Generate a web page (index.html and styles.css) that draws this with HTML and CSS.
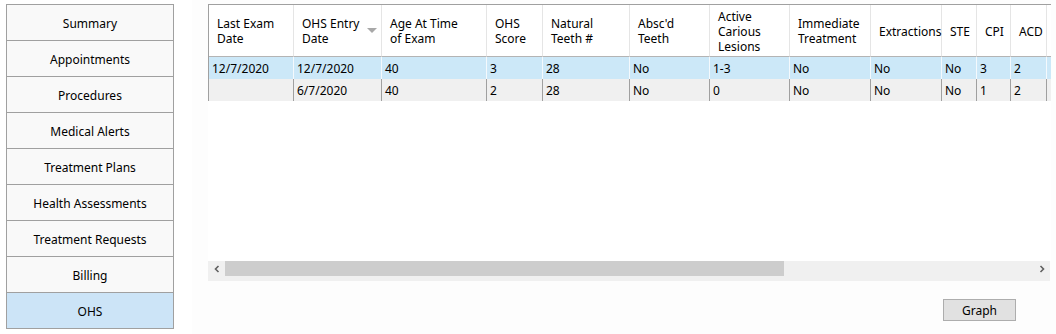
FILE: index.html
```html
<!DOCTYPE html>
<html lang="en">
<head>
    <meta charset="UTF-8">
    <title>OHS</title>
    <link rel="stylesheet" href="styles.css">
</head>
<body>
    <div class="window">
        <nav class="tabs">
            <div class="tab">Summary</div>
            <div class="tab">Appointments</div>
            <div class="tab">Procedures</div>
            <div class="tab">Medical Alerts</div>
            <div class="tab">Treatment Plans</div>
            <div class="tab">Health Assessments</div>
            <div class="tab">Treatment Requests</div>
            <div class="tab">Billing</div>
            <div class="tab active">OHS</div>
        </nav>

        <main class="panel">
            <div class="grid-area">
                <div class="grid">
                    <div class="row head">
                        <div class="cell">Last Exam<br>Date</div>
                        <div class="cell">OHS Entry<br>Date<span class="sort"></span></div>
                        <div class="cell">Age At Time<br>of Exam</div>
                        <div class="cell">OHS<br>Score</div>
                        <div class="cell">Natural<br>Teeth #</div>
                        <div class="cell">Absc'd<br>Teeth</div>
                        <div class="cell">Active<br>Carious<br>Lesions</div>
                        <div class="cell">Immediate<br>Treatment</div>
                        <div class="cell">Extractions</div>
                        <div class="cell">STE</div>
                        <div class="cell">CPI</div>
                        <div class="cell">ACD</div>
                        <div class="cell"></div>
                    </div>
                    <div class="row selected">
                        <div class="cell">12/7/2020</div>
                        <div class="cell">12/7/2020</div>
                        <div class="cell">40</div>
                        <div class="cell">3</div>
                        <div class="cell">28</div>
                        <div class="cell">No</div>
                        <div class="cell">1-3</div>
                        <div class="cell">No</div>
                        <div class="cell">No</div>
                        <div class="cell">No</div>
                        <div class="cell">3</div>
                        <div class="cell">2</div>
                        <div class="cell"></div>
                    </div>
                    <div class="row">
                        <div class="cell"></div>
                        <div class="cell">6/7/2020</div>
                        <div class="cell">40</div>
                        <div class="cell">2</div>
                        <div class="cell">28</div>
                        <div class="cell">No</div>
                        <div class="cell">0</div>
                        <div class="cell">No</div>
                        <div class="cell">No</div>
                        <div class="cell">No</div>
                        <div class="cell">1</div>
                        <div class="cell">2</div>
                        <div class="cell"></div>
                    </div>
                </div>
            </div>

            <div class="hscroll">
                <div class="arrow">
                    <svg width="8" height="8" viewBox="0 0 8 8"><path d="M5.5 1 L2.5 4 L5.5 7" fill="none" stroke="#606060" stroke-width="1.6"/></svg>
                </div>
                <div class="thumb"></div>
                <div class="arrow right">
                    <svg width="8" height="8" viewBox="0 0 8 8"><path d="M2.5 1 L5.5 4 L2.5 7" fill="none" stroke="#606060" stroke-width="1.6"/></svg>
                </div>
            </div>

            <div class="actions">
                <button type="button" class="btn">Graph</button>
            </div>
        </main>
    </div>
</body>
</html>
```

FILE: styles.css
```css
body {
    margin: 0;
    background-color: #fff;
    font-family: 'Noto Sans', 'Open Sans', sans-serif;
    font-size: 12px;
    color: #000;
}

.window {
    display: flex;
    height: 334px;
    overflow: hidden;
}

/* left tab buttons */
.tabs {
    width: 168px;
    margin: 4px 0 0 6px;
    display: flex;
    flex-direction: column;
}

.tab {
    height: 36px;
    box-sizing: border-box;
    padding-top: 2px;
    border: 1px solid #a0a0a0;
    border-top: none;
    background-color: #f9f9f9;
    display: flex;
    align-items: center;
    justify-content: center;
}

.tab:first-child {
    height: 37px;
    border-top: 1px solid #a0a0a0;
}

.tab.active {
    background-color: #cce4f7;
}

/* right panel */
.panel {
    flex: 1;
    margin-left: 18px;
    padding: 4px 0 0 16px;
    background-color: #fdfdfd;
    display: flex;
    flex-direction: column;
}

.grid-area {
    width: 843px;
    height: 257px;
    overflow: hidden;
    background-color: #fff;
}

.grid {
    display: grid;
    grid-template-columns: 85px 88px 105px 56px 87px 80px 80px 81px 71px 35px 34px 36px 80px;
    width: max-content;
    border-left: 1px solid #a0a0a0;
    border-top: 1px solid #a0a0a0;
}

.row {
    display: contents;
}

.cell {
    box-sizing: border-box;
    height: 22px;
    line-height: 22px;
    padding: 1px 0 0 3px;
    border-right: 1px solid #a0a0a0;
    background-color: #f0f0f0;
    white-space: nowrap;
}

.row.selected .cell {
    background-color: #cce8f8;
    border-right-color: #f4f9fd;
}

.row.head .cell {
    height: 52px;
    line-height: 15px;
    padding: 1px 4px 0 8px;
    display: flex;
    align-items: center;
    background-color: #fff;
    border-right-color: #e5e5e5;
    border-bottom: 1px solid #b4b4b4;
}

.sort {
    margin-left: auto;
    width: 0;
    height: 0;
    border-left: 5px solid transparent;
    border-right: 5px solid transparent;
    border-top: 5px solid #a8a8a8;
    margin-top: -1px;
}

/* horizontal scrollbar */
.hscroll {
    width: 842px;
    height: 20px;
    background-color: #f0f0f0;
    display: flex;
    align-items: flex-start;
}

.arrow {
    width: 17px;
    height: 15px;
    display: flex;
    align-items: center;
    justify-content: center;
}

.arrow.right {
    margin-left: auto;
}

.thumb {
    width: 559px;
    height: 15px;
    background-color: #cdcdcd;
}

.actions {
    display: flex;
    justify-content: flex-end;
    padding-right: 40px;
    margin-top: 18px;
}

.btn {
    width: 73px;
    height: 22px;
    padding: 0;
    background-color: #e1e1e1;
    border: 1px solid #adadad;
    font-family: inherit;
    font-size: 12px;
    color: #000;
}
```
